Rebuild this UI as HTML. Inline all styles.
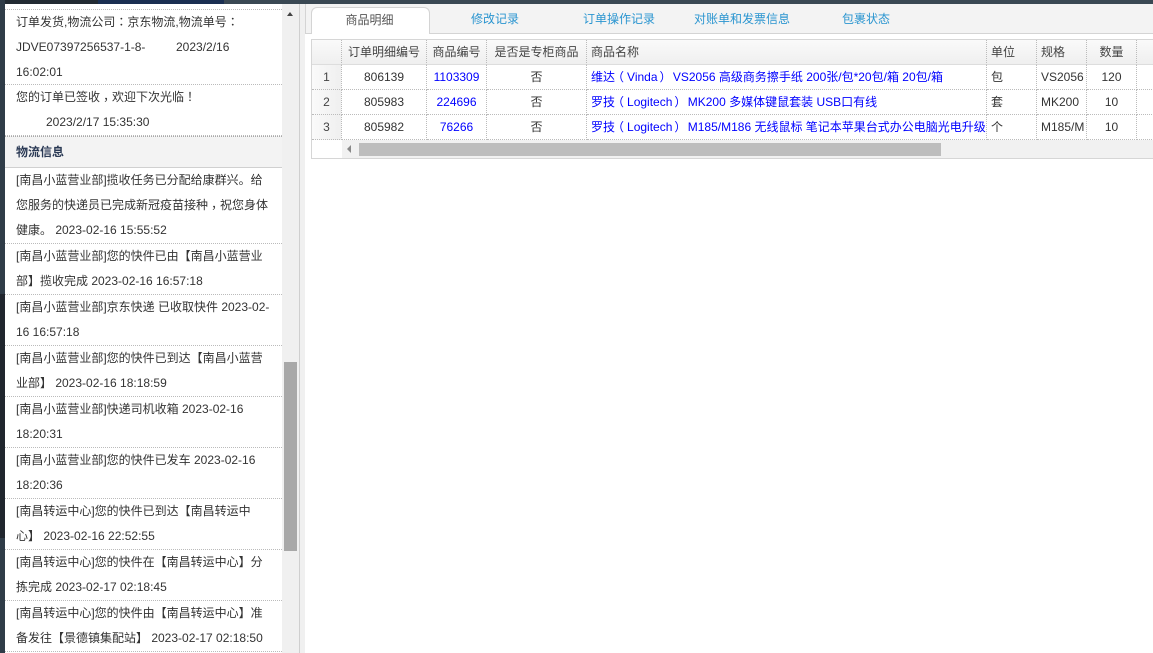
<!DOCTYPE html>
<html lang="zh"><head><meta charset="utf-8"><title>订单</title>
<style>
*{box-sizing:border-box}
html,body{margin:0;padding:0;width:1153px;height:653px;overflow:hidden;background:#fff}
body{position:relative;font:12px/25px "Liberation Sans","Noto Sans CJK SC",sans-serif;color:#333}
.abs{position:absolute}
.t{font-family:"Noto Sans CJK TC",sans-serif;line-height:0}
.k{font-family:"Noto Sans CJK TC",sans-serif;position:relative;top:3px;line-height:0}
.po{font-family:"Noto Sans CJK TC",sans-serif;line-height:0;position:relative;left:-3px}
.pc{font-family:"Noto Sans CJK TC",sans-serif;line-height:0;position:relative;left:2px}
#top{left:0;top:0;width:1153px;height:4px;background:#3a4853}
#top1{left:0;top:0;width:98px;height:4px;background:#222b33}
#top2{left:98px;top:0;width:126px;height:4px;background:#1a2f52}
#strip{left:0;top:0;width:5px;height:653px;background:#2f3c48}
#strip2{left:0;top:294px;width:5px;height:244px;background:#20262e}
#panel{left:5px;top:4px;width:277px;height:649px;background:#fff;overflow:hidden}
.it{position:absolute;left:0;width:277px;padding-left:11px;white-space:nowrap;border-bottom:1px dotted #bbb}
#h{position:absolute;left:0;top:132px;width:277px;height:32px;background:#f3f3f3;border-top:1px dotted #aaa;border-bottom:1px solid #d0d0d0;padding-left:11px;line-height:30px;font-weight:bold;color:#2b3a55}
#track{left:282px;top:4px;width:17px;height:649px;background:#f0f0f0}
#arrow{left:287px;top:12px;width:0;height:0;border-left:3.5px solid transparent;border-right:3.5px solid transparent;border-bottom:4px solid #444}
#thumb{left:284px;top:362px;width:13px;height:189px;background:#a8a8a8}
#sep{left:299px;top:4px;width:1px;height:649px;background:#cfcfcf}
#gut{left:300px;top:4px;width:5px;height:649px;background:#f0f0f0}
#tabs{left:305px;top:4px;width:848px;height:30px;background:#f3f3f3;border-bottom:1px solid #d4d4d4;border-left:1px solid #d4d4d4}
#tab1{left:311px;top:7px;width:119px;height:27px;background:#fff;border:1px solid #d4d4d4;border-bottom:0;border-radius:6px 6px 0 0;text-align:center;line-height:24px;color:#555;padding-right:2px}
.tab{position:absolute;top:7px;line-height:25px;color:#2a95d0;white-space:nowrap;text-align:center}
#tb{left:311px;top:39px;width:842px;height:120px;border:1px solid #d6d6d6;border-right:0;background:#fff}
.c{position:absolute;height:25px;line-height:25px;white-space:nowrap;overflow:hidden;border-right:1px dotted #bbb;border-bottom:1px dotted #bbb}
.hd{height:25px;background:linear-gradient(#fafafa,#efefef);border-bottom:1px solid #ddd;text-align:center;color:#444}
.n{background:linear-gradient(90deg,#fafafa,#efefef);text-align:center;color:#444}
.m{text-align:center}.l{text-align:left;padding-left:4px}.b{color:#00f}
#sb{position:absolute;left:30px;top:100px;width:812px;height:18px;background:#f1f1f1}
#sbt{position:absolute;left:17px;top:3px;width:582px;height:13px;background:#bdbdbd}
#sba{position:absolute;left:5px;top:5px;width:0;height:0;border-top:4px solid transparent;border-bottom:4px solid transparent;border-right:4px solid #888}
</style></head><body>
<div class="abs" id="top"></div><div class="abs" id="top1"></div><div class="abs" id="top2"></div>
<div class="abs" id="strip"></div><div class="abs" id="strip2"></div>
<div class="abs" id="panel">
<div class="it" style="top:5px;border-top:1px dotted #bbb;height:76px">订单发货,物流公司<span class="t" lang="zh-Hant">：</span>京东物流,物流单号<span class="t" lang="zh-Hant">：</span><br>JDVE07397256537-1-8-<span style="position:absolute;left:171px">2023/2/16</span><br>16:02:01</div>
<div class="it" style="top:81px;height:51px">您的订单已签收<span class="k" lang="zh-Hant">，</span>欢迎下次光临<span class="t" lang="zh-Hant">！</span><br><span style="margin-left:30px">2023/2/17 15:35:30</span></div>
<div id="h">物流信息</div>
<div class="it" style="top:164px;height:76px">[南昌小蓝营业部]揽收任务已分配给康群兴。给<br>您服务的快递员已完成新冠疫苗接种<span class="k" lang="zh-Hant">，</span>祝您身体<br>健康。 2023-02-16 15:55:52</div>
<div class="it" style="top:240px;height:51px">[南昌小蓝营业部]您的快件已由【南昌小蓝营业<br>部】揽收完成 2023-02-16 16:57:18</div>
<div class="it" style="top:291px;height:51px">[南昌小蓝营业部]京东快递 已收取快件 2023-02-<br>16 16:57:18</div>
<div class="it" style="top:342px;height:51px">[南昌小蓝营业部]您的快件已到达【南昌小蓝营<br>业部】 2023-02-16 18:18:59</div>
<div class="it" style="top:393px;height:51px">[南昌小蓝营业部]快递司机收箱 2023-02-16<br>18:20:31</div>
<div class="it" style="top:444px;height:51px">[南昌小蓝营业部]您的快件已发车 2023-02-16<br>18:20:36</div>
<div class="it" style="top:495px;height:51px">[南昌转运中心]您的快件已到达【南昌转运中<br>心】 2023-02-16 22:52:55</div>
<div class="it" style="top:546px;height:51px">[南昌转运中心]您的快件在【南昌转运中心】分<br>拣完成 2023-02-17 02:18:45</div>
<div class="it" style="top:597px;height:51px">[南昌转运中心]您的快件由【南昌转运中心】准<br>备发往【景德镇集配站】 2023-02-17 02:18:50</div>
</div>
<div class="abs" id="track"></div><div class="abs" id="arrow"></div><div class="abs" id="thumb"></div>
<div class="abs" id="sep"></div><div class="abs" id="gut"></div>
<div class="abs" id="tabs"></div>
<div class="abs" id="tab1">商品明细</div>
<div class="tab" style="left:430px;width:130px">修改记录</div>
<div class="tab" style="left:554px;width:130px">订单操作记录</div>
<div class="tab" style="left:677px;width:130px">对账单和发票信息</div>
<div class="tab" style="left:801px;width:130px">包裹状态</div>
<div class="abs" id="tb">
<div class="c hd" style="left:0;top:0;width:30px"></div>
<div class="c hd" style="left:30px;top:0;width:85px">订单明细编号</div>
<div class="c hd" style="left:115px;top:0;width:60px">商品编号</div>
<div class="c hd" style="left:175px;top:0;width:100px">是否是专柜商品</div>
<div class="c hd l" style="left:275px;top:0;width:400px">商品名称</div>
<div class="c hd l" style="left:675px;top:0;width:50px">单位</div>
<div class="c hd l" style="left:725px;top:0;width:50px">规格</div>
<div class="c hd" style="left:775px;top:0;width:50px">数量</div>
<div class="c hd" style="left:825px;top:0;width:17px;border-right:0"></div>

<div class="c n" style="left:0;top:25px;width:30px">1</div>
<div class="c m" style="left:30px;top:25px;width:85px">806139</div>
<div class="c m b" style="left:115px;top:25px;width:60px">1103309</div>
<div class="c m" style="left:175px;top:25px;width:100px">否</div>
<div class="c l b" style="left:275px;top:25px;width:400px">维达<span class="po" lang="zh-Hant">（</span>Vinda<span class="pc" lang="zh-Hant">）</span> VS2056 高级商务擦手纸 200张/包*20包/箱 20包/箱</div>
<div class="c l" style="left:675px;top:25px;width:50px">包</div>
<div class="c l" style="left:725px;top:25px;width:50px">VS2056</div>
<div class="c m" style="left:775px;top:25px;width:50px">120</div>
<div class="c" style="left:825px;top:25px;width:17px;border-right:0"></div>

<div class="c n" style="left:0;top:50px;width:30px">2</div>
<div class="c m" style="left:30px;top:50px;width:85px">805983</div>
<div class="c m b" style="left:115px;top:50px;width:60px">224696</div>
<div class="c m" style="left:175px;top:50px;width:100px">否</div>
<div class="c l b" style="left:275px;top:50px;width:400px">罗技<span class="po" lang="zh-Hant">（</span>Logitech<span class="pc" lang="zh-Hant">）</span> MK200 多媒体键鼠套装 USB口有线</div>
<div class="c l" style="left:675px;top:50px;width:50px">套</div>
<div class="c l" style="left:725px;top:50px;width:50px">MK200</div>
<div class="c m" style="left:775px;top:50px;width:50px">10</div>
<div class="c" style="left:825px;top:50px;width:17px;border-right:0"></div>

<div class="c n" style="left:0;top:75px;width:30px">3</div>
<div class="c m" style="left:30px;top:75px;width:85px">805982</div>
<div class="c m b" style="left:115px;top:75px;width:60px">76266</div>
<div class="c m" style="left:175px;top:75px;width:100px">否</div>
<div class="c l b" style="left:275px;top:75px;width:400px">罗技<span class="po" lang="zh-Hant">（</span>Logitech<span class="pc" lang="zh-Hant">）</span> M185/M186 无线鼠标 笔记本苹果台式办公电脑光电升级</div>
<div class="c l" style="left:675px;top:75px;width:50px">个</div>
<div class="c l" style="left:725px;top:75px;width:50px">M185/M</div>
<div class="c m" style="left:775px;top:75px;width:50px">10</div>
<div class="c" style="left:825px;top:75px;width:17px;border-right:0"></div>
<div id="sb"><div id="sba"></div><div id="sbt"></div></div>
</div>
</body></html>
